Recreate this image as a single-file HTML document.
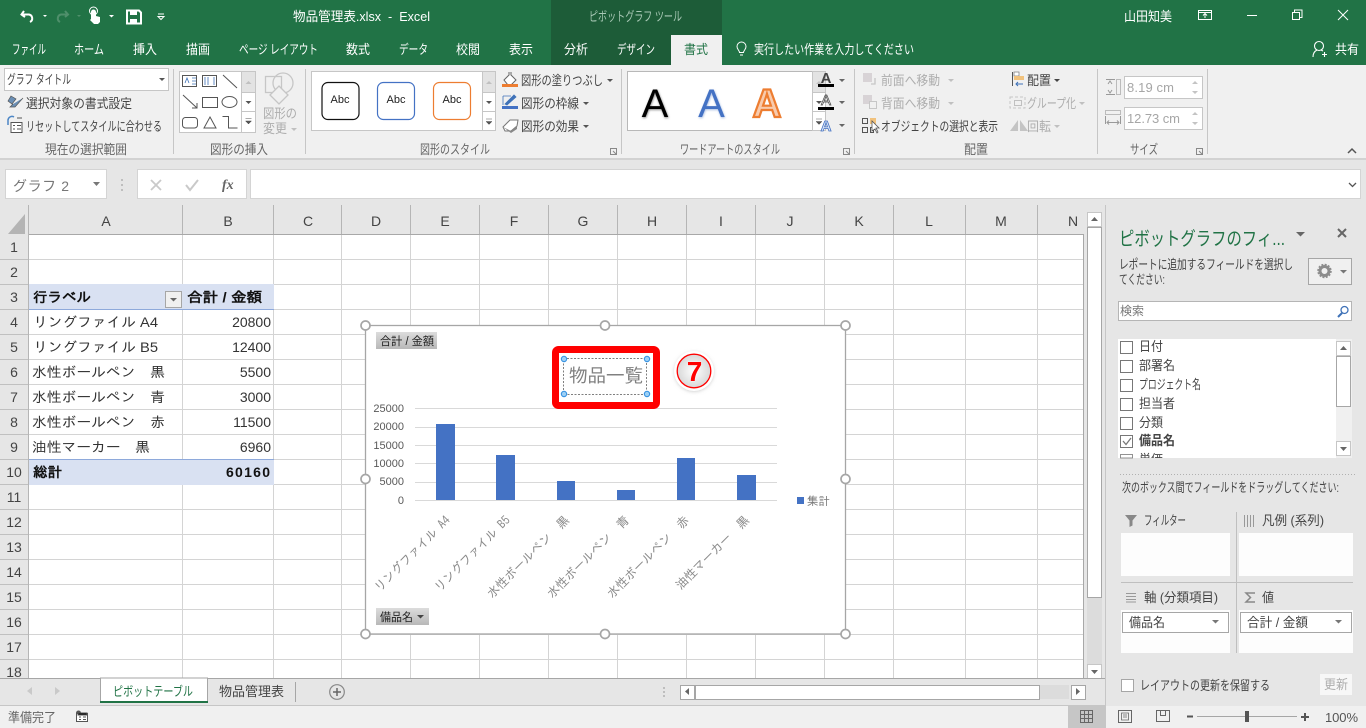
<!DOCTYPE html>
<html lang="ja"><head><meta charset="utf-8"><title>物品管理表.xlsx - Excel</title>
<style>
html,body{margin:0;padding:0;background:#fff;overflow:hidden}
svg{display:block;position:absolute;left:0;top:0}
text{font-family:"Liberation Sans","Noto Sans CJK JP",sans-serif;font-size:13px;fill:#444;white-space:pre}
.w{fill:#fff}.d{fill:#444}.g{fill:#adadad}.l{fill:#666}
.c{font-family:"Liberation Sans","IPAGothic",sans-serif;font-size:14px;fill:#333}
.b{font-weight:bold;fill:#111}
.h{font-size:14px;fill:#444;text-anchor:middle}
.n{font-size:14px;fill:#333;text-anchor:end}
.ax{font-size:11px;fill:#595959;text-anchor:end}
.dl{font-family:"IPAGothic",sans-serif;font-size:12.5px;fill:#8a8a8a;text-anchor:end}
</style></head><body>
<svg width="1366" height="728" viewBox="0 0 1366 728" xmlns="http://www.w3.org/2000/svg">
<defs>
<linearGradient id="fb" x1="0" y1="0" x2="0" y2="1"><stop offset="0" stop-color="#dcdcdc"/><stop offset="1" stop-color="#b8b8b8"/></linearGradient>
<radialGradient id="cg"><stop offset="0" stop-color="#fff"/><stop offset="1" stop-color="#d8d8d8"/></radialGradient>
<filter id="sh" x="-30%" y="-30%" width="160%" height="160%"><feGaussianBlur stdDeviation="2"/></filter>
<filter id="bl" x="-20%" y="-20%" width="140%" height="140%"><feGaussianBlur stdDeviation="1"/></filter>
</defs>

<!-- title bar -->
<rect width="1366" height="65" fill="#217346"/>
<rect x="551" width="171" height="65" fill="#1d5c38"/>
<rect x="671" y="35" width="51" height="30" fill="#f0f0f0"/>

<!-- QAT -->
<path d="M24 11l-2.500 3.500 3.500 2.500M23 14.500h6a4 4 0 0 1 1 7.500" fill="none" stroke="#fff" stroke-width="2"/>
<path d="M43 15h4l-2 2z" fill="#fff"/>
<path d="M65 11l3 3.500-3 2.500M67 14.500h-6a4 4 0 0 0-1 7.500" fill="none" stroke="#4f8f6b" stroke-width="2"/>
<path d="M77 15h4l-2 2z" fill="#4f8f6b"/>
<path d="M91 19v-7a2.500 2.500 0 0 1 5 0v4l4 1v5l-2 2h-4l-4-4z" fill="#fff"/><circle cx="93.500" cy="11" r="4" fill="none" stroke="#fff"/>
<path d="M109 15h5l-2.500 2.500z" fill="#fff"/>
<path d="M127 10.500h12l2 2v11h-14z" fill="none" stroke="#fff" stroke-width="2"/><rect x="130" y="11" width="7" height="4" fill="#fff"/><rect x="130" y="19" width="7" height="5" fill="#fff"/>
<path d="M158 14h6M158 16.500h6l-3 3z" fill="none" stroke="#fff"/>

<text x="293" y="21" class="w" textLength="137" lengthAdjust="spacingAndGlyphs">物品管理表.xlsx  -  Excel</text>
<text x="589" y="21" style="fill:#a9c9b6" textLength="93" lengthAdjust="spacingAndGlyphs">ピボットグラフ ツール</text>
<text x="1124" y="21" class="w" textLength="48" lengthAdjust="spacingAndGlyphs">山田知美</text>
<path d="M1198.500 10.500h13v9h-13zM1198.500 12.500h13M1205 18v-4M1203 15.500l2-2 2 2" fill="none" stroke="#fff"/>
<path d="M1247 15.500h10" stroke="#fff"/>
<path d="M1292.500 12.500h7v7h-7zM1294.500 12v-2h7.500v7.500h-2.500" fill="none" stroke="#fff"/>
<path d="M1338 10l10 10M1348 10l-10 10" stroke="#fff" fill="none"/>

<!-- tabs -->
<g class="w">
<text x="12" y="54" class="w" textLength="34" lengthAdjust="spacingAndGlyphs">ファイル</text>
<text x="74" y="54" class="w" textLength="30" lengthAdjust="spacingAndGlyphs">ホーム</text>
<text x="133" y="54" class="w" textLength="24" lengthAdjust="spacingAndGlyphs">挿入</text>
<text x="186" y="54" class="w" textLength="24" lengthAdjust="spacingAndGlyphs">描画</text>
<text x="239" y="54" class="w" textLength="79" lengthAdjust="spacingAndGlyphs">ページ レイアウト</text>
<text x="346" y="54" class="w" textLength="24" lengthAdjust="spacingAndGlyphs">数式</text>
<text x="399" y="54" class="w" textLength="29" lengthAdjust="spacingAndGlyphs">データ</text>
<text x="456" y="54" class="w" textLength="24" lengthAdjust="spacingAndGlyphs">校閲</text>
<text x="509" y="54" class="w" textLength="24" lengthAdjust="spacingAndGlyphs">表示</text>
<text x="564" y="54" class="w" textLength="24" lengthAdjust="spacingAndGlyphs">分析</text>
<text x="617" y="54" class="w" textLength="38" lengthAdjust="spacingAndGlyphs">デザイン</text>
<text x="684" y="54" style="fill:#217346" textLength="24" lengthAdjust="spacingAndGlyphs">書式</text>
<text x="754" y="54" class="w" textLength="160" lengthAdjust="spacingAndGlyphs">実行したい作業を入力してください</text>
<text x="1335" y="54" class="w" textLength="24" lengthAdjust="spacingAndGlyphs">共有</text>
</g>
<path d="M740 55h3M739.500 52.500c0-2-2.500-3-2.500-6a4.500 4.500 0 0 1 9 0c0 3-2.500 4-2.500 6z" fill="none" stroke="#fff"/>
<circle cx="1319" cy="46" r="4.500" fill="none" stroke="#fff" stroke-width="1.100"/><path d="M1313 57c0-4 2-6 4-7M1321 50l2 1M1324.500 52v5M1322 54.500h5" fill="none" stroke="#fff" stroke-width="1.100"/>

<!-- ribbon -->
<rect y="65" width="1366" height="93" fill="#f0f0f0"/>
<rect y="158" width="1366" height="2" fill="#d2d2d2"/>
<rect y="160" width="1366" height="45" fill="#e6e6e6"/>
<g fill="#c6c6c6">
<rect x="173" y="69" width="1" height="85"/><rect x="305" y="69" width="1" height="85"/><rect x="621" y="69" width="1" height="85"/><rect x="854" y="69" width="1" height="85"/><rect x="1097" y="69" width="1" height="85"/><rect x="1207" y="69" width="1" height="85"/>
</g>

<!-- current selection -->
<rect x="4.500" y="68.500" width="164" height="22" fill="#fff" stroke="#c6c6c6"/>
<text x="7" y="84" class="d" textLength="64" lengthAdjust="spacingAndGlyphs">グラフ タイトル</text>
<path d="M159 78h6l-3 3z" fill="#555"/>
<path d="M11 96l5 3-4 5-4-3zM23 98l-8 9h-5l3-3" fill="#6b8fb5" stroke="#555" stroke-width=".7"/>
<text x="26" y="108" class="d" textLength="106" lengthAdjust="spacingAndGlyphs">選択対象の書式設定</text>
<path d="M8 125v-5a4 4 0 0 1 6-3" fill="none" stroke="#4c86c6" stroke-width="1.500"/><path d="M11 122.500h11v10h-11z" fill="#fff" stroke="#555"/><path d="M13 125.500h2M17 125.500h4M13 129h2M17 129h4M17 118h5" stroke="#555"/>
<text x="26" y="131" class="d" textLength="136" lengthAdjust="spacingAndGlyphs">リセットしてスタイルに合わせる</text>
<text x="45" y="154" class="l" textLength="82" lengthAdjust="spacingAndGlyphs">現在の選択範囲</text>

<!-- insert shapes -->
<rect x="179.500" y="71.500" width="62" height="61" fill="#fff" stroke="#c6c6c6"/>
<rect x="241.500" y="71.500" width="14" height="61" fill="#fff" stroke="#c6c6c6"/>
<rect x="242" y="72" width="13" height="20" fill="#e3e3e3"/>
<path d="M241.500 92.500h14M241.500 111.500h14" stroke="#c6c6c6"/>
<path d="M245.500 84h6l-3-3z" fill="#c0c0c0"/><path d="M245.500 101h6l-3 3z" fill="#555"/><path d="M245.500 118.500h6M245.500 121h6l-3 3z" fill="#555" stroke="#555" stroke-width=".5"/>
<g fill="none" stroke="#555">
<rect x="182.500" y="75.500" width="14" height="11"/><rect x="202.500" y="75.500" width="14" height="11"/>
<path d="M223 75l14 13M183 95l14 13M192 108h5v-5"/>
<rect x="202.500" y="97.500" width="15" height="10"/><ellipse cx="229.500" cy="102" rx="7.500" ry="5.500"/>
<rect x="182.500" y="117.500" width="15" height="10.500" rx="3"/><path d="M210 117l6 11h-12zM222.500 116.500h6v11.500h9"/>
</g>
<path d="M185 83l2-5 2 5M192 78h4M192 81h4M192 84h4M205 77v8M208 77v8M214 77v8" stroke="#3f72b8" fill="none" stroke-width=".8"/>
<g fill="none" stroke="#c6c6c6" stroke-width="1.300"><rect x="265.500" y="76.500" width="16" height="16"/><circle cx="283" cy="83" r="10"/><path d="M279 86l9 9-9 9-9-9z" fill="#f0f0f0"/></g>
<text x="263" y="118" class="g" textLength="34" lengthAdjust="spacingAndGlyphs">図形の</text>
<text x="263" y="133" class="g" textLength="24" lengthAdjust="spacingAndGlyphs">変更</text><path d="M291 128h6l-3 3z" fill="#c0c0c0"/>
<text x="210" y="154" class="l" textLength="58" lengthAdjust="spacingAndGlyphs">図形の挿入</text>

<!-- shape styles -->
<rect x="311.500" y="71.500" width="171" height="59" fill="#fff" stroke="#c6c6c6"/>
<rect x="482.500" y="71.500" width="13" height="59" fill="#fff" stroke="#c6c6c6"/>
<rect x="483" y="72" width="12" height="20" fill="#e3e3e3"/>
<path d="M482.500 92.500h13M482.500 111.500h13" stroke="#c6c6c6"/>
<path d="M486 84h6l-3-3z" fill="#c0c0c0"/><path d="M486 101h6l-3 3z" fill="#555"/><path d="M486 119h6M486 121.500h6l-3 3z" fill="#555" stroke="#555" stroke-width=".5"/>
<rect x="322" y="82.500" width="37" height="37" rx="6" fill="#fff" stroke="#111" stroke-width="1.200"/>
<rect x="377.500" y="82.500" width="37" height="37" rx="6" fill="#fff" stroke="#4472c4" stroke-width="1.200"/>
<rect x="433.500" y="82.500" width="37" height="37" rx="6" fill="#fff" stroke="#ed7d31" stroke-width="1.200"/>
<text x="340" y="103" style="font-size:11px;fill:#222;text-anchor:middle">Abc</text>
<text x="396" y="103" style="font-size:11px;fill:#222;text-anchor:middle">Abc</text>
<text x="452" y="103" style="font-size:11px;fill:#222;text-anchor:middle">Abc</text>
<path d="M504 80l6-6 6 6-5 5h-3z" fill="#fff" stroke="#666"/><rect x="502" y="84" width="16" height="3" fill="#ed7d31"/><path d="M508 72h4v3h-4z" fill="#aaa"/>
<rect x="502" y="106" width="16" height="3" fill="#4472c4"/><path d="M505 104l9-9 2 2-9 8zM503 96h8M503 96v9" fill="#3f72b8" stroke="#3f72b8" stroke-width=".8"/>
<path d="M503 127l7-7h8l-1 6-6 5-6 0z" fill="#fff" stroke="#777"/><path d="M503 127l8 4 6-5 0 3-6 4z" fill="#888"/>
<text x="521" y="85" class="d" textLength="82" lengthAdjust="spacingAndGlyphs">図形の塗りつぶし</text><path d="M607 79h6l-3 3z" fill="#555"/>
<text x="521" y="108" class="d" textLength="58" lengthAdjust="spacingAndGlyphs">図形の枠線</text><path d="M583 102h6l-3 3z" fill="#555"/>
<text x="521" y="131" class="d" textLength="58" lengthAdjust="spacingAndGlyphs">図形の効果</text><path d="M583 125h6l-3 3z" fill="#555"/>
<text x="420" y="154" class="l" textLength="70" lengthAdjust="spacingAndGlyphs">図形のスタイル</text>
<path d="M610.500 148.500h6v6h-6zM613 151l3 3" fill="none" stroke="#888"/>

<!-- wordart -->
<rect x="627.500" y="71.500" width="185" height="59" fill="#fff" stroke="#b8b8b8"/>
<rect x="812.500" y="71.500" width="13" height="59" fill="#fff" stroke="#c6c6c6"/>
<rect x="813" y="72" width="12" height="20" fill="#e3e3e3"/>
<path d="M812.500 92.500h13M812.500 111.500h13" stroke="#c6c6c6"/>
<path d="M816 84h6l-3-3z" fill="#c0c0c0"/><path d="M816 101h6l-3 3z" fill="#555"/><path d="M816 119h6M816 121.500h6l-3 3z" fill="#555" stroke="#555" stroke-width=".5"/>
<text x="655.500" y="118" filter="url(#bl)" style="font-size:40px;fill:#888;text-anchor:middle">A</text>
<text x="655" y="117" style="font-size:40px;fill:#000;text-anchor:middle">A</text>
<text x="712" y="118" filter="url(#bl)" style="font-size:40px;fill:#a9bde2;text-anchor:middle">A</text>
<text x="711.500" y="117" style="font-size:40px;fill:#4472c4;text-anchor:middle">A</text>
<text x="767" y="117" style="font-size:40px;font-weight:bold;fill:#f8cbad;stroke:#ed7d31;stroke-width:2.200px;text-anchor:middle">A</text>
<text x="826" y="83" style="font-size:15px;font-weight:bold;fill:#444;text-anchor:middle">A</text><rect x="818" y="84" width="16" height="3" fill="#000"/>
<text x="826" y="105" style="font-size:15px;fill:#fff;stroke:#444;stroke-width:.7px;text-anchor:middle">A</text><rect x="818" y="107" width="16" height="3" fill="#000"/>
<text x="826" y="131" style="font-size:15px;font-weight:bold;fill:#dbe6f6;stroke:#4472c4;stroke-width:.8px;text-anchor:middle">A</text>
<path d="M839 79h6l-3 3zM839 101h6l-3 3zM839 124h6l-3 3z" fill="#666"/>
<text x="680" y="154" class="l" textLength="100" lengthAdjust="spacingAndGlyphs">ワードアートのスタイル</text>
<path d="M843.500 148.500h6v6h-6zM846 151l3 3" fill="none" stroke="#888"/>

<!-- arrange -->
<rect x="863" y="73" width="9" height="9" fill="#d8d3d6"/><path d="M871 84h4v-6" fill="none" stroke="#c6c6c6" stroke-width="1.300"/>
<rect x="863" y="95" width="9" height="9" fill="#d8d3d6"/><rect x="869.500" y="101.500" width="7" height="7" fill="#f0f0f0" stroke="#c6c6c6"/>
<text x="881" y="85" class="g" textLength="59" lengthAdjust="spacingAndGlyphs">前面へ移動</text><path d="M948 79h6l-3 3z" fill="#c0c0c0"/>
<text x="881" y="108" class="g" textLength="59" lengthAdjust="spacingAndGlyphs">背面へ移動</text><path d="M948 102h6l-3 3z" fill="#c0c0c0"/>
<g fill="none" stroke="#555"><rect x="862.500" y="118.500" width="5" height="5"/><rect x="862.500" y="127.500" width="5" height="5"/><rect x="870.500" y="127.500" width="3" height="5"/></g>
<rect x="870" y="118" width="6" height="6" fill="#f1c27d"/><path d="M872 121v10l3-2 2 4 1-1-2-4h3z" fill="#fff" stroke="#555" stroke-width=".8"/>
<text x="881" y="131" class="d" textLength="117" lengthAdjust="spacingAndGlyphs">オブジェクトの選択と表示</text>
<path d="M1012.500 72v14" stroke="#555"/><rect x="1014" y="72" width="5" height="4" fill="#fff" stroke="#777" stroke-width=".7"/><rect x="1014" y="76" width="10" height="4" fill="#f1c27d"/><path d="M1023 84h-7M1018 82l-2 2 2 2" fill="none" stroke="#3f72b8"/>
<text x="1027" y="85" class="d" textLength="24" lengthAdjust="spacingAndGlyphs">配置</text><path d="M1054 79h6l-3 3z" fill="#444"/>
<path d="M1010 97h15v11h-15z" fill="none" stroke="#c6c6c6" stroke-dasharray="3 2"/><rect x="1014.500" y="100.500" width="7" height="5" fill="none" stroke="#c0c0c0"/>
<text x="1027" y="108" class="g" textLength="49" lengthAdjust="spacingAndGlyphs">グループ化</text><path d="M1079 102h6l-3 3z" fill="#c0c0c0"/>
<path d="M1018 120v11h-8zM1020 120v11h8z" fill="#c4c4c4"/>
<text x="1027" y="131" class="g" textLength="24" lengthAdjust="spacingAndGlyphs">回転</text><path d="M1054 125h6l-3 3z" fill="#c0c0c0"/>
<text x="964" y="154" class="l" textLength="24" lengthAdjust="spacingAndGlyphs">配置</text>

<!-- size -->
<rect x="1124.500" y="76.500" width="78" height="22" fill="#fff" stroke="#c6c6c6"/>
<rect x="1124.500" y="107.500" width="78" height="22" fill="#fff" stroke="#c6c6c6"/>
<text x="1127" y="92" style="font-size:13px;fill:#a6a6a6" textLength="47">8.19 cm</text>
<text x="1127" y="123" style="font-size:13px;fill:#a6a6a6" textLength="53">12.73 cm</text>
<path d="M1192 84h6l-3-3zM1192 91h6l-3 3zM1192 115h6l-3-3zM1192 122h6l-3 3z" fill="#c4c4c4"/>
<rect x="1116.500" y="79.500" width="4" height="15" fill="none" stroke="#bbb"/><path d="M1106 79.500h9M1106 94.500h9M1108 84l2-3 2 3M1108 90l2 3 2-3" fill="none" stroke="#999"/>
<rect x="1105.500" y="110.500" width="15" height="4" fill="none" stroke="#bbb"/><path d="M1105.500 116v8M1120.500 116v8M1107 122.500h12M1109 120.500l-2 2 2 2M1117 120.500l2 2-2 2" fill="none" stroke="#999"/>
<text x="1130" y="154" class="l" textLength="28" lengthAdjust="spacingAndGlyphs">サイズ</text>
<path d="M1196.500 148.500h6v6h-6zM1199 151l3 3" fill="none" stroke="#888"/>
<path d="M1348 153l4-4 4 4" fill="none" stroke="#555" stroke-width="1.500"/>

<!-- formula bar -->
<rect x="5.500" y="169.500" width="101" height="29" fill="#fff" stroke="#d4d4d4"/>
<text x="13" y="191" style="font-size:14px;fill:#777" textLength="56">グラフ 2</text>
<path d="M93 182h7l-3.500 4z" fill="#777"/>
<path d="M122 179v2M122 184v2M122 189v2" stroke="#b0b0b0" stroke-width="1.500"/>
<rect x="137.500" y="169.500" width="109" height="29" fill="#fff" stroke="#d4d4d4"/>
<path d="M151 180l10 10M161 180l-10 10" stroke="#c9c9c9" stroke-width="1.800"/>
<path d="M186 185l4 5 8-10" fill="none" stroke="#c9c9c9" stroke-width="2"/>
<text x="222" y="189" style="font-family:'Liberation Serif',serif;font-style:italic;font-weight:bold;font-size:14px;fill:#666">fx</text>
<rect x="250.500" y="169.500" width="1110" height="29" fill="#fff" stroke="#d4d4d4"/>
<path d="M1349 183l3.500 3.500 3.500-3.500" fill="none" stroke="#555" stroke-width="1.300"/>

<!-- grid -->
<rect x="0" y="205" width="1105" height="473" fill="#e6e6e6"/>
<rect x="29" y="235" width="1055" height="443" fill="#fff"/>
<path d="M25 214v20h-17z" fill="#b4b4b4"/>
<g stroke="#d4d4d4" stroke-width="1">
<path d="M29 259.500h1054M29 284.500h1054M29 309.500h1054M29 334.500h1054M29 359.500h1054M29 384.500h1054M29 409.500h1054M29 434.500h1054M29 459.500h1054M29 484.500h1054M29 509.500h1054M29 534.500h1054M29 559.500h1054M29 584.500h1054M29 609.500h1054M29 634.500h1054M29 659.500h1054"/>
<path d="M182.500 235v443M273.500 235v443M341.500 235v443M410.500 235v443M479.500 235v443M548.500 235v443M617.500 235v443M686.500 235v443M755.500 235v443M824.500 235v443M893.500 235v443M965.500 235v443M1037.500 235v443"/>
</g>
<path d="M28.500 205v473M182.500 205v29M273.500 205v29M341.500 205v29M410.500 205v29M479.500 205v29M548.500 205v29M617.500 205v29M686.500 205v29M755.500 205v29M824.500 205v29M893.500 205v29M965.500 205v29M1037.500 205v29" stroke="#b5b5b5"/>
<path d="M29 234.500h1055M1083.500 235v443" stroke="#a8a8a8"/>
<path d="M0 259.500h28M0 284.500h28M0 309.500h28M0 334.500h28M0 359.500h28M0 384.500h28M0 409.500h28M0 434.500h28M0 459.500h28M0 484.500h28M0 509.500h28M0 534.500h28M0 559.500h28M0 584.500h28M0 609.500h28M0 634.500h28M0 659.500h28" stroke="#c0c0c0"/>
<g>
<text x="106" y="226" class="h">A</text><text x="228" y="226" class="h">B</text><text x="308" y="226" class="h">C</text><text x="376" y="226" class="h">D</text><text x="445" y="226" class="h">E</text><text x="514" y="226" class="h">F</text><text x="583" y="226" class="h">G</text><text x="652" y="226" class="h">H</text><text x="721" y="226" class="h">I</text><text x="790" y="226" class="h">J</text><text x="859" y="226" class="h">K</text><text x="929" y="226" class="h">L</text><text x="1001" y="226" class="h">M</text><text x="1073" y="226" class="h">N</text>
<text x="14" y="252" class="h">1</text><text x="14" y="277" class="h">2</text><text x="14" y="302" class="h">3</text><text x="14" y="327" class="h">4</text><text x="14" y="352" class="h">5</text><text x="14" y="377" class="h">6</text><text x="14" y="402" class="h">7</text><text x="14" y="427" class="h">8</text><text x="14" y="452" class="h">9</text><text x="14" y="477" class="h">10</text><text x="14" y="502" class="h">11</text><text x="14" y="527" class="h">12</text><text x="14" y="552" class="h">13</text><text x="14" y="577" class="h">14</text><text x="14" y="602" class="h">15</text><text x="14" y="627" class="h">16</text><text x="14" y="652" class="h">17</text><text x="14" y="677" class="h">18</text>
</g>

<!-- pivot -->
<rect x="29" y="284" width="245" height="25" fill="#d9e1f2"/>
<rect x="29" y="309" width="245" height="1" fill="#8ea9db"/>
<rect x="29" y="460" width="245" height="25" fill="#d9e1f2"/>
<rect x="29" y="459" width="245" height="1" fill="#8ea9db"/>
<rect x="165.500" y="291.500" width="16" height="16" fill="#f0f0f0" stroke="#a6a6a6"/><path d="M170 298h7l-3.500 3.500z" fill="#666"/>
<text x="33" y="302" class="c b" textLength="58" lengthAdjust="spacingAndGlyphs">行ラベル</text>
<text x="187" y="302" class="c b" textLength="75" lengthAdjust="spacingAndGlyphs">合計 / 金額</text>
<text x="33" y="327" class="c" textLength="125" lengthAdjust="spacingAndGlyphs">リングファイル A4</text>
<text x="33" y="352" class="c" textLength="125" lengthAdjust="spacingAndGlyphs">リングファイル B5</text>
<text x="32" y="377" class="c" textLength="133" lengthAdjust="spacingAndGlyphs">水性ボールペン　黒</text>
<text x="32" y="402" class="c" textLength="133" lengthAdjust="spacingAndGlyphs">水性ボールペン　青</text>
<text x="32" y="427" class="c" textLength="133" lengthAdjust="spacingAndGlyphs">水性ボールペン　赤</text>
<text x="32" y="452" class="c" textLength="118" lengthAdjust="spacingAndGlyphs">油性マーカー　黒</text>
<text x="33" y="477" class="c b" textLength="29" lengthAdjust="spacingAndGlyphs">総計</text>
<text x="271" y="327" class="n">20800</text><text x="271" y="352" class="n">12400</text><text x="271" y="377" class="n">5500</text><text x="271" y="402" class="n">3000</text><text x="271" y="427" class="n">11500</text><text x="271" y="452" class="n">6960</text>
<text x="226" y="477" style="font-size:14px;font-weight:bold;fill:#111" textLength="44" lengthAdjust="spacing">60160</text>

<!-- chart -->
<rect x="365.500" y="325.500" width="480" height="308.500" fill="#fff" stroke="#a6a6a6" stroke-width="1.300"/>
<path d="M415 408.500h362M415 427.500h362M415 445.500h362M415 463.500h362M415 482.500h362M415 500.500h362" stroke="#d9d9d9"/>
<g fill="#4472c4"><rect x="436" y="424" width="19" height="76"/><rect x="496" y="455" width="19" height="45"/><rect x="557" y="481" width="18" height="19"/><rect x="617" y="490" width="18" height="10"/><rect x="677" y="458" width="18" height="42"/><rect x="737" y="475" width="19" height="25"/></g>
<text x="404" y="412" class="ax">25000</text><text x="404" y="430" class="ax">20000</text><text x="404" y="449" class="ax">15000</text><text x="404" y="467" class="ax">10000</text><text x="404" y="485" class="ax">5000</text><text x="404" y="504" class="ax">0</text>
<text class="dl" transform="translate(451,521) rotate(-45)" textLength="101" lengthAdjust="spacingAndGlyphs">リングファイル A4</text>
<text class="dl" transform="translate(511,521) rotate(-45)" textLength="101" lengthAdjust="spacingAndGlyphs">リングファイル B5</text>
<text class="dl" transform="translate(570,521) rotate(-45)" textLength="110" lengthAdjust="spacingAndGlyphs">水性ボールペン　黒</text>
<text class="dl" transform="translate(630,521) rotate(-45)" textLength="110" lengthAdjust="spacingAndGlyphs">水性ボールペン　青</text>
<text class="dl" transform="translate(690,521) rotate(-45)" textLength="110" lengthAdjust="spacingAndGlyphs">水性ボールペン　赤</text>
<text class="dl" transform="translate(750,521) rotate(-45)" textLength="98" lengthAdjust="spacingAndGlyphs">油性マーカー　黒</text>
<rect x="797" y="497" width="7" height="7" fill="#4472c4"/>
<text x="807" y="505" style="font-family:'IPAGothic',sans-serif;font-size:11.500px;fill:#7a7a7a" textLength="23">集計</text>
<rect x="376" y="332" width="61" height="17" fill="url(#fb)"/>
<text x="380" y="345" style="font-size:11.500px;fill:#222" textLength="54" lengthAdjust="spacingAndGlyphs">合計 / 金額</text>
<rect x="376" y="608" width="53" height="17" fill="url(#fb)"/>
<text x="380" y="621" style="font-size:11.500px;fill:#222" textLength="33" lengthAdjust="spacingAndGlyphs">備品名</text><path d="M417 615h7l-3.500 3.500z" fill="#444"/>

<!-- red highlight -->
<rect x="555.500" y="349.500" width="101" height="56" rx="3" fill="#fff" stroke="#ff0000" stroke-width="7"/>
<rect x="563.500" y="358.500" width="83" height="36" fill="none" stroke="#7f7f7f" stroke-dasharray="2 1.500"/>
<text x="569" y="382" style="font-size:18px;fill:#808080" textLength="74" lengthAdjust="spacingAndGlyphs">物品一覧</text>
<g fill="#9dd0f5" stroke="#2f8ee0"><circle cx="564" cy="359" r="2.700"/><circle cx="647" cy="359" r="2.700"/><circle cx="564" cy="394" r="2.700"/><circle cx="647" cy="394" r="2.700"/></g>
<circle cx="694" cy="372" r="19" fill="#bbb" filter="url(#sh)"/>
<circle cx="694" cy="371" r="20" fill="#fff"/>
<circle cx="694" cy="371" r="16.800" fill="url(#cg)" stroke="#ff0000" stroke-width="1.300"/>
<text x="694.500" y="381" style="font-size:28px;font-weight:bold;fill:#ff0000;stroke:#fff;stroke-width:.6px;text-anchor:middle;paint-order:stroke">7</text>

<!-- chart handles -->
<g fill="#fff" stroke="#a6a6a6" stroke-width="1.700">
<circle cx="365.500" cy="325.500" r="4.500"/><circle cx="605" cy="325.500" r="4.500"/><circle cx="845.500" cy="325.500" r="4.500"/><circle cx="365.500" cy="479" r="4.500"/><circle cx="845.500" cy="479" r="4.500"/><circle cx="365.500" cy="634" r="4.500"/><circle cx="605" cy="634" r="4.500"/><circle cx="845.500" cy="634" r="4.500"/>
</g>

<!-- vertical scrollbar -->
<rect x="1084" y="205" width="21" height="473" fill="#e6e6e6"/>
<rect x="1087" y="227" width="15" height="437" fill="#dcdcdc"/>
<rect x="1087.500" y="212.500" width="14" height="14" fill="#fff" stroke="#c6c6c6"/><path d="M1091 221h7l-3.500-4z" fill="#666"/>
<rect x="1087.500" y="227.500" width="14" height="370" fill="#fff" stroke="#a6a6a6"/>
<rect x="1087.500" y="664.500" width="14" height="14" fill="#fff" stroke="#c6c6c6"/><path d="M1091 670h7l-3.500 4z" fill="#666"/>

<!-- sheet tabs -->
<rect x="0" y="678" width="1105" height="28" fill="#e6e6e6"/>
<rect x="0" y="678" width="1105" height="1" fill="#a6a6a6"/>
<rect x="0" y="705" width="1366" height="1" fill="#c6c6c6"/>
<path d="M27 691l5-4v8zM60 691l-5-4v8z" fill="#c9c9c9"/>
<path d="M100.500 703v-25h107v25" fill="#fff" stroke="#a6a6a6"/>
<rect x="100" y="701" width="108" height="2" fill="#217346"/>
<text x="113" y="696" style="fill:#217346" textLength="80" lengthAdjust="spacingAndGlyphs">ピボットテーブル</text>
<text x="219" y="696" class="d" textLength="65" lengthAdjust="spacingAndGlyphs">物品管理表</text>
<path d="M295.500 682v20" stroke="#a6a6a6"/>
<circle cx="337" cy="692" r="7.300" fill="none" stroke="#888" stroke-width="1.200"/><path d="M337 688v8M333 692h8" stroke="#666" stroke-width="1.500"/>
<path d="M664 687v2M664 691v2M664 695v2" stroke="#b0b0b0" stroke-width="1.500"/>

<!-- horizontal scrollbar -->
<rect x="680" y="685" width="389" height="14" fill="#dcdcdc"/>
<rect x="680.500" y="685.500" width="14" height="14" fill="#fff" stroke="#a6a6a6"/><path d="M689 688v7l-4-3.500z" fill="#666"/>
<rect x="695.500" y="685.500" width="344" height="14" fill="#fff" stroke="#a6a6a6"/>
<rect x="1071.500" y="685.500" width="14" height="14" fill="#fff" stroke="#a6a6a6"/><path d="M1076 688v7l4-3.500z" fill="#666"/>

<!-- right pane -->
<rect x="1105" y="205" width="261" height="501" fill="#e6e6e6"/>
<rect x="1105" y="205" width="1" height="501" fill="#c6c6c6"/>
<text x="1119" y="245" style="font-size:19px;fill:#217346" textLength="166" lengthAdjust="spacingAndGlyphs">ピボットグラフのフィ...</text>
<path d="M1296 232h9l-4.500 4.500z" fill="#666"/>
<path d="M1338 229l8 8M1346 229l-8 8" stroke="#666" stroke-width="2"/>
<text x="1119" y="269" class="d" textLength="174" lengthAdjust="spacingAndGlyphs">レポートに追加するフィールドを選択し</text>
<text x="1119" y="284" class="d" textLength="46" lengthAdjust="spacingAndGlyphs">てください:</text>
<rect x="1308.500" y="258.500" width="43" height="26" fill="#f0f0f0" stroke="#a6a6a6"/>
<circle cx="1324.500" cy="271" r="4.500" fill="none" stroke="#8c8c8c" stroke-width="3"/><circle cx="1324.500" cy="271" r="6.500" fill="none" stroke="#8c8c8c" stroke-width="1.500" stroke-dasharray="2 1.400"/>
<path d="M1340 270h7l-3.500 3.500z" fill="#777"/>
<rect x="1118.500" y="301.500" width="233" height="19" fill="#fff" stroke="#b5b5b5"/>
<text x="1120" y="315" style="font-size:12px;fill:#777" textLength="24">検索</text>
<circle cx="1344.500" cy="310" r="3.500" fill="none" stroke="#3f72b8" stroke-width="1.300"/><path d="M1342 313l-4 4" stroke="#3f72b8" stroke-width="2"/>

<rect x="1118" y="339" width="234" height="119" fill="#fff"/>
<g fill="#fff" stroke="#777"><rect x="1120.500" y="341.500" width="12" height="12"/><rect x="1120.500" y="360.500" width="12" height="12"/><rect x="1120.500" y="379.500" width="12" height="12"/><rect x="1120.500" y="398.500" width="12" height="12"/><rect x="1120.500" y="417.500" width="12" height="12"/><rect x="1120.500" y="435.500" width="12" height="12"/><rect x="1120.500" y="454.500" width="12" height="3.500" stroke-width=".8"/></g>
<path d="M1123 441l3 3.500 5-6.500" fill="none" stroke="#777" stroke-width="1.300"/>
<text x="1139" y="351" class="d" textLength="24" lengthAdjust="spacingAndGlyphs">日付</text>
<text x="1139" y="370" class="d" textLength="36" lengthAdjust="spacingAndGlyphs">部署名</text>
<text x="1139" y="389" class="d" textLength="62" lengthAdjust="spacingAndGlyphs">プロジェクト名</text>
<text x="1139" y="408" class="d" textLength="36" lengthAdjust="spacingAndGlyphs">担当者</text>
<text x="1139" y="427" class="d" textLength="24" lengthAdjust="spacingAndGlyphs">分類</text>
<text x="1139" y="445" class="d" style="font-weight:bold" textLength="36" lengthAdjust="spacingAndGlyphs">備品名</text>
<svg x="1118" y="339" width="234" height="119"><text x="21" y="125" class="d" textLength="24" lengthAdjust="spacingAndGlyphs">単価</text></svg>
<rect x="1336" y="339" width="16" height="119" fill="#f0f0f0"/>
<rect x="1336.500" y="341.500" width="14" height="14" fill="#fff" stroke="#c6c6c6"/><path d="M1340 350h7l-3.500-4z" fill="#666"/>
<rect x="1336.500" y="356.500" width="14" height="50" fill="#fff" stroke="#a6a6a6"/>
<rect x="1336.500" y="441.500" width="14" height="14" fill="#fff" stroke="#c6c6c6"/><path d="M1340 447h7l-3.500 4z" fill="#666"/>
<path d="M1120 474.500h236" stroke="#b0b0b0" stroke-dasharray="1 2"/>
<text x="1122" y="492" class="d" textLength="217" lengthAdjust="spacingAndGlyphs">次のボックス間でフィールドをドラッグしてください:</text>

<path d="M1125 515h12l-4.500 5.500v5l-3 1.500v-6.500z" fill="#888"/>
<path d="M1244.500 515v12M1247.500 515v12M1250.500 515v12M1253.500 515v12" stroke="#999"/>
<text x="1144" y="525" class="d" textLength="42" lengthAdjust="spacingAndGlyphs">フィルター</text>
<text x="1262" y="525" class="d" textLength="62" lengthAdjust="spacingAndGlyphs">凡例 (系列)</text>
<rect x="1121" y="533" width="109" height="43" fill="#fdfdfd"/><rect x="1239" y="533" width="114" height="43" fill="#fdfdfd"/>
<rect x="1121" y="610" width="109" height="43" fill="#fdfdfd"/><rect x="1239" y="610" width="114" height="43" fill="#fdfdfd"/>
<path d="M1236.500 512v141M1121 582.500h232" stroke="#bfbfbf"/>
<path d="M1126 593.500h10M1126 596.500h10M1126 599.500h10M1126 602h10" stroke="#999"/>
<path d="M1255 593h-9l4.500 4.500-4.500 4.500h9" fill="none" stroke="#888" stroke-width="1.500"/>
<text x="1144" y="602" class="d" textLength="74" lengthAdjust="spacingAndGlyphs">軸 (分類項目)</text>
<text x="1262" y="602" class="d" textLength="12" lengthAdjust="spacingAndGlyphs">値</text>
<rect x="1122.500" y="612.500" width="106" height="20" fill="#fff" stroke="#a6a6a6"/>
<rect x="1240.500" y="612.500" width="111" height="20" fill="#fff" stroke="#a6a6a6"/>
<text x="1129" y="627" class="d" textLength="36" lengthAdjust="spacingAndGlyphs">備品名</text>
<text x="1247" y="627" class="d" textLength="61" lengthAdjust="spacingAndGlyphs">合計 / 金額</text>
<path d="M1212 620h7l-3.500 3.500zM1335 620h7l-3.500 3.500z" fill="#777"/>
<rect x="1121.500" y="679.500" width="12" height="12" fill="#fff" stroke="#a6a6a6"/>
<text x="1140" y="690" class="d" textLength="130" lengthAdjust="spacingAndGlyphs">レイアウトの更新を保留する</text>
<rect x="1320" y="674" width="32" height="21" fill="#f7f7f7"/>
<text x="1324" y="689" class="g" textLength="24" lengthAdjust="spacingAndGlyphs">更新</text>

<!-- status bar -->
<rect x="0" y="706" width="1366" height="22" fill="#f0f0f0"/>
<text x="8" y="722" class="l" textLength="48" lengthAdjust="spacingAndGlyphs">準備完了</text>
<circle cx="78.500" cy="713" r="2.500" fill="#555"/><rect x="76.500" y="713.500" width="11" height="8" fill="#fff" stroke="#555"/><path d="M78 713h9v2h-9zM79 717h2M83 717h3M79 719.500h2M83 719.500h3" stroke="#555"/>
<rect x="1068" y="706" width="38" height="22" fill="#c6c6c6"/>
<path d="M1080.500 710.500h12v12h-12zM1084.500 710.500v12M1088.500 710.500v12M1080.500 714.500h12M1080.500 718.500h12" fill="none" stroke="#666"/>
<path d="M1118.500 710.500h13v12h-13z" fill="none" stroke="#666"/><path d="M1121.500 713h7v7h-7zM1123 715h4M1123 717h4" fill="none" stroke="#666" stroke-width=".8"/>
<path d="M1156.500 710.500v11h13v-11zM1160.500 710.500v5h5v-5" fill="none" stroke="#666"/>
<path d="M1187 716.500h6" stroke="#555" stroke-width="2"/>
<path d="M1197 716.500h100" stroke="#a6a6a6"/>
<rect x="1245" y="711" width="4" height="11" fill="#555"/>
<path d="M1301 717h8M1305 713v8" stroke="#555" stroke-width="2"/>
<text x="1325" y="722" style="font-size:13px;fill:#555" textLength="33">100%</text>
</svg>
</body></html>
